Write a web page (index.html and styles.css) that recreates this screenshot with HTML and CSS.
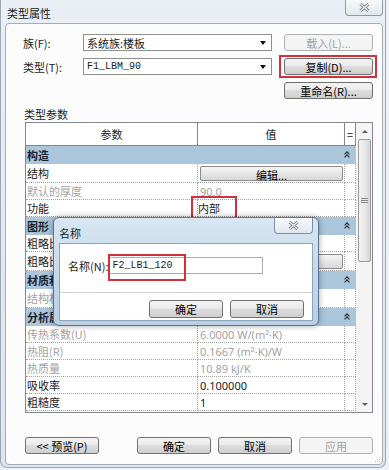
FILE: index.html
```html
<!DOCTYPE html>
<html lang="zh-CN">
<head>
  <meta charset="UTF-8">
  <meta name="viewport" content="width=device-width, initial-scale=1.0">
  <title>类型属性</title>
  <link rel="stylesheet" href="styles.css">
</head>
<body>
  <div class="win">
    <div class="titlebar">
      <span class="title">类型属性</span>
      <span class="close">
        <svg width="11" height="9" viewBox="0 0 11 9"><path d="M1.5 1 L9.5 8 M9.5 1 L1.5 8" stroke="#7a8592" stroke-width="3"/><path d="M1.5 1 L9.5 8 M9.5 1 L1.5 8" stroke="#f4f6f8" stroke-width="1.1"/></svg>
      </span>
    </div>

    <div class="client">
      <div class="field">
        <span class="label">族(F):</span>
        <div class="combo"><span>系统族:楼板</span><i class="arrow"></i></div>
        <button class="btn side" disabled>载入(L)...</button>
      </div>
      <div class="field">
        <span class="label">类型(T):</span>
        <div class="combo mono"><span>F1_LBM_90</span><i class="arrow"></i></div>
        <button class="btn side mark">复制(D)...</button>
      </div>
      <div class="field">
        <button class="btn side">重命名(R)...</button>
      </div>

      <div class="caption">类型参数</div>

      <div class="props">
        <div class="grid">
          <div class="head"><span>参数</span><span>值</span><span>=</span></div>

          <div class="band">构造<i class="fold"></i></div>
          <div class="row edit"><span>结构</span><span class="ed"><button class="cellbtn">编辑...</button></span><span></span></div>
          <div class="row ro"><span>默认的厚度</span><span>90.0</span><span></span></div>
          <div class="row"><span>功能</span><span class="mk">内部</span><span></span></div>

          <div class="band">图形<i class="fold"></i></div>
          <div class="row"><span>粗略比例填充样式</span><span></span><span></span></div>
          <div class="row edit"><span>粗略比例填充颜色</span><span class="ed"><button class="cellbtn">黑色</button></span><span></span></div>

          <div class="band">材质和装饰<i class="fold"></i></div>
          <div class="row edit ro"><span>结构材质</span><span>&lt;按类别&gt;</span><span></span></div>

          <div class="band">分析属性<i class="fold"></i></div>
          <div class="row ro"><span>传热系数(U)</span><span>6.0000 W/(m²·K)</span><span></span></div>
          <div class="row ro"><span>热阻(R)</span><span>0.1667 (m²·K)/W</span><span></span></div>
          <div class="row ro"><span>热质量</span><span>10.89 kJ/K</span><span></span></div>
          <div class="row"><span>吸收率</span><span>0.100000</span><span></span></div>
          <div class="row"><span>粗糙度</span><span>1</span><span></span></div>
        </div>
        <div class="vscroll">
          <div class="sb-arrow up"></div>
          <div class="thumb">
            <svg width="7" height="5" viewBox="0 0 7 5"><path d="M0 0.5 H7 M0 2.5 H7 M0 4.5 H7" stroke="#8a8a8a" stroke-width="1"/></svg>
          </div>
          <div class="track"></div>
          <div class="sb-arrow down"></div>
        </div>
      </div>

      <div class="actions">
        <button class="btn">&lt;&lt; 预览(P)</button>
        <button class="btn push">确定</button>
        <button class="btn">取消</button>
        <button class="btn" disabled>应用</button>
      </div>

      <svg class="grip" width="7" height="7" viewBox="0 0 7 7"><g fill="#b4bac1"><rect x="5" y="1" width="1" height="1"/><rect x="3" y="3" width="1" height="1"/><rect x="5" y="3" width="1" height="1"/><rect x="1" y="5" width="1" height="1"/><rect x="3" y="5" width="1" height="1"/><rect x="5" y="5" width="1" height="1"/></g></svg>
    </div>

    <!-- 名称 对话框 -->
    <div class="dlg">
      <div class="dlg-title">
        <span class="title">名称</span>
        <span class="close">
          <svg width="11" height="9" viewBox="0 0 11 9"><path d="M1.5 1 L9.5 8 M9.5 1 L1.5 8" stroke="#7a8592" stroke-width="3"/><path d="M1.5 1 L9.5 8 M9.5 1 L1.5 8" stroke="#f4f6f8" stroke-width="1.1"/></svg>
        </span>
      </div>
      <div class="dlg-body">
        <div class="name-row">
          <span class="name-label">名称(N):</span>
          <div class="input mark-in">F2_LB1_120</div>
        </div>
        <div class="sep"></div>
        <div class="dlg-actions">
          <button class="btn">确定</button>
          <button class="btn">取消</button>
        </div>
      </div>
    </div>
  </div>
</body>
</html>
```

FILE: styles.css
```css
* {
  margin: 0;
  padding: 0;
  box-sizing: border-box;
}
body {
  background: #eef2f6;
  font: 11px "Noto Sans CJK SC", "Noto Sans", sans-serif;
  color: #1b1b1b;
}
.win {
  position: relative;
  width: 386px;
  height: 468px;
  display: flex;
  flex-direction: column;
  background: linear-gradient(#e9eff5, #dde6ee);
  border: 1px solid #9aa7b4;
  border-top: 0;
  border-radius: 0 0 7px 7px;
}
.titlebar {
  height: 23px;
  display: flex;
  align-items: flex-start;
}
.title {
  padding: 6px 0 0 6px;
  line-height: 14px;
}
.close {
  margin-left: auto;
  margin-right: 2px;
  width: 38px;
  height: 16px;
  border: 1px solid #8f9aa6;
  border-top: 0;
  border-radius: 0 0 4px 4px;
  background: linear-gradient(#f7f9fb, #e2e8ee);
  display: flex;
  align-items: center;
  justify-content: center;
}

.client {
  position: relative;
  flex: 1;
  margin: 0 2px 2px 4px;
  border: 1px solid #a3adb8;
  border-radius: 4px;
  background: #fcfcfc;
  padding: 10px 9px 0 19px;
  display: flex;
  flex-direction: column;
}
.field {
  display: flex;
  align-items: center;
  height: 17px;
  margin-left: -2px;
}
.field + .field {
  margin-top: 7px;
}
.label {
  width: 60px;
}
.combo {
  width: 189px;
  height: 17px;
  border: 1px solid #8e8f8f;
  background: #fff;
  display: flex;
  align-items: center;
  padding: 0 5px 0 3px;
}
.combo.mono span,
.input {
  font-family: "Liberation Mono", monospace;
  font-size: 10px;
}
.arrow {
  margin-left: auto;
  width: 0;
  height: 0;
  border-left: 3px solid transparent;
  border-right: 3px solid transparent;
  border-top: 4px solid #111;
}
.btn {
  height: 17px;
  padding: 0;
  border: 1px solid #707070;
  border-radius: 3px;
  background: linear-gradient(#f3f3f3, #ebebeb 45%, #dddddd 50%, #cfcfcf);
  font: inherit;
  color: #000;
  display: flex;
  align-items: center;
  justify-content: center;
}
.btn:disabled {
  border-color: #adb2b5;
  background: #f4f4f4;
  color: #a3a3a3;
}
.field .side {
  margin-left: auto;
  width: 89px;
}
.mark {
  position: relative;
}
.mark::after {
  content: "";
  position: absolute;
  top: -4px;
  bottom: -4px;
  left: -6px;
  right: -5px;
  border: 2px solid #d3303c;
}

.caption {
  margin-top: 8px;
  margin-left: -1px;
  line-height: 14px;
}
.props {
  display: flex;
  height: 291px;
  margin-top: 1px;
  border: 1px solid #828790;
  background: #fff;
}
.grid {
  width: 330px;
  display: flex;
  flex-direction: column;
}
.head,
.row {
  display: grid;
  grid-template-columns: 172px 147px 11px;
}
.head {
  height: 23px;
  border-bottom: 1px solid #828790;
}
.head span {
  display: flex;
  align-items: center;
  justify-content: center;
  border-right: 1px solid #828790;
  color: #222;
}
.row {
  height: 17px;
}
.row.edit {
  height: 19px;
}
.row > span {
  display: flex;
  align-items: center;
  padding-left: 1px;
  white-space: nowrap;
  overflow: hidden;
  border-right: 1px dotted #a3a3a3;
  border-bottom: 1px dotted #a3a3a3;
}
.row > span + span {
  padding-left: 2px;
  font-family: "Noto Sans", "Noto Sans CJK SC", sans-serif;
}
.row.ro {
  color: #a3a3a3;
}
.row > span.ed {
  padding: 0 1px 0 2px;
}
.cellbtn {
  width: 100%;
  height: 15px;
  border: 1px solid #8a8a8a;
  border-radius: 2px;
  background: linear-gradient(#f6f6f6, #e6e6e6 50%, #d9d9d9);
  font: inherit;
  color: #000;
}
.row > span.mk {
  position: relative;
  overflow: visible;
  padding-left: 0;
}
.mk::after {
  content: "";
  position: absolute;
  left: -7px;
  top: -4px;
  width: 42px;
  height: 21px;
  border: 2px solid #d3303c;
}
.band {
  height: 18px;
  background: #abc5da;
  display: flex;
  align-items: center;
  justify-content: space-between;
  padding: 0 5px 0 1px;
  font-weight: bold;
  color: #1a2430;
  white-space: nowrap;
}
.fold {
  width: 7px;
  height: 8px;
  position: relative;
}
.fold::before,
.fold::after {
  content: "";
  position: absolute;
  left: 1px;
  width: 3px;
  height: 3px;
  border-left: 1.5px solid #222;
  border-top: 1.5px solid #222;
  transform: rotate(45deg);
}
.fold::before {
  top: 1px;
}
.fold::after {
  top: 4px;
}

.vscroll {
  flex: 1;
  display: flex;
  flex-direction: column;
  padding: 0 1px 0 2px;
  background: #f4f4f4;
}
.sb-arrow {
  height: 16px;
  display: flex;
  align-items: center;
  justify-content: center;
}
.sb-arrow::before {
  content: "";
  border-left: 3px solid transparent;
  border-right: 3px solid transparent;
}
.sb-arrow.up::before {
  border-bottom: 3px solid #606060;
}
.sb-arrow.down::before {
  border-top: 3px solid #606060;
}
.thumb {
  height: 123px;
  border: 1px solid #9a9a9a;
  border-radius: 2px;
  background: linear-gradient(90deg, #f4f4f4, #e6e6e6 60%, #d6d6d6);
  display: flex;
  align-items: center;
  justify-content: center;
}
.track {
  flex: 1;
}

.actions {
  display: flex;
  gap: 7px;
  margin-top: 24px;
}
.actions .btn {
  width: 74px;
}
.actions .push {
  margin-left: auto;
}
.grip {
  position: absolute;
  right: 1px;
  bottom: 1px;
}

/* 名称 */
.dlg {
  position: absolute;
  left: 52px;
  top: 217px;
  width: 266px;
  height: 109px;
  display: flex;
  flex-direction: column;
  border: 1px solid #5b7290;
  border-radius: 6px;
  background: linear-gradient(#d8e6f3, #c4d8eb 55%, #b9cfe5);
  box-shadow: 0 0 6px rgba(0, 0, 0, 0.35);
}
.dlg-title {
  height: 25px;
  display: flex;
  align-items: flex-start;
}
.dlg-title .title {
  padding: 8px 0 0 5px;
}
.dlg-title .close {
  width: 39px;
  margin-right: 5px;
  border-color: #7d90a6;
}
.dlg-body {
  flex: 1;
  margin: 0 5px 4px;
  border: 1px solid #8ea3b8;
  background: #fff;
  display: flex;
  flex-direction: column;
}
.name-row {
  display: flex;
  align-items: center;
  padding: 13px 0 0 8px;
}
.name-label {
  white-space: nowrap;
  margin-right: 1px;
}
.input {
  width: 154px;
  height: 17px;
  border: 1px solid #abadb3;
  padding-left: 2px;
  display: flex;
  align-items: center;
}
.mark-in {
  position: relative;
}
.mark-in::after {
  content: "";
  position: absolute;
  left: -2px;
  top: -4px;
  width: 74px;
  height: 23px;
  border: 2px solid #d3303c;
}
.sep {
  height: 1px;
  margin-top: 18px;
  background: #cfd3d7;
}
.dlg-actions {
  display: flex;
  justify-content: flex-end;
  gap: 7px;
  padding: 7px 8px 0 0;
}
.dlg-actions .btn {
  width: 74px;
  height: 18px;
}
```
